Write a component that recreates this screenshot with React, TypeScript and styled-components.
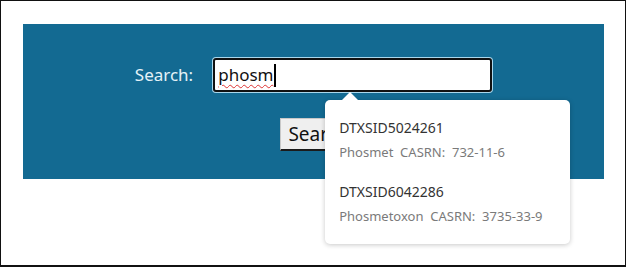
import React from "react";
import styled, { createGlobalStyle } from "styled-components";

const Global = createGlobalStyle`
  html, body { margin: 0; padding: 0; background: #fff; }
  body { font-family: "Noto Sans", "Open Sans", sans-serif; }
  * { box-sizing: border-box; }
`;

const Frame = styled.div`
  width: 626px;
  height: 267px;
  border: 1px solid #111;
  border-bottom-width: 2px;
  padding: 23px 21px 0 22px;
  background: #fff;
`;

const Panel = styled.div`
  height: 155px;
  background: #136a92;
  display: flex;
  flex-direction: column;
  align-items: center;
  padding-top: 34px;
`;

const Row = styled.div`
  display: flex;
  align-items: center;
  gap: 20px;
`;

const Label = styled.label`
  color: #e4f2f8;
  font-size: 17px;
  line-height: 24px;
`;

const FieldWrap = styled.div`
  position: relative;
`;

const Field = styled.div`
  width: 279px;
  height: 34px;
  background: #fff;
  border: 2px solid #111;
  border-radius: 3px;
  box-shadow: 0 0 0 1px #a9d7ec;
  display: flex;
  align-items: center;
  padding-left: 3px;
  font-size: 17px;
  color: #111;
`;

const Typed = styled.span`
  text-decoration: underline wavy #d33;
  text-decoration-thickness: 1px;
  text-underline-offset: 3px;
  line-height: 24px;
`;

const Caret = styled.span`
  display: inline-block;
  width: 2px;
  height: 23px;
  background: #000;
  margin-left: 1px;
`;

const Dropdown = styled.div`
  position: absolute;
  left: 112px;
  top: 42px;
  width: 245px;
  height: 144px;
  background: #fff;
  border-radius: 5px;
  box-shadow: 0 1px 5px rgba(0, 0, 0, 0.22);
  padding: 16px 0 0 14px;
  z-index: 2;

  &::before {
    content: "";
    position: absolute;
    left: 17px;
    top: -8px;
    border-left: 8px solid transparent;
    border-right: 8px solid transparent;
    border-bottom: 8px solid #fff;
  }
`;

const Item = styled.div`
  padding-bottom: 16px;
`;

const Title = styled.div`
  font-size: 14px;
  line-height: 24px;
  color: #333;
`;

const Sub = styled.div`
  font-size: 13px;
  line-height: 24px;
  color: #7a7a7a;
  white-space: pre;
`;

const Button = styled.button`
  margin-top: 26px;
  margin-left: 10px;
  height: 33px;
  padding: 0 7px;
  font-family: "Noto Sans", "Open Sans", sans-serif;
  font-size: 19px;
  color: #111;
  background: #efefef;
  border: 1px solid #c8c8c8;
  border-bottom: 2px solid #1b1b1b;
  border-radius: 0;
`;

const results = [
  { id: "DTXSID5024261", name: "Phosmet", casrn: "732-11-6" },
  { id: "DTXSID6042286", name: "Phosmetoxon", casrn: "3735-33-9" },
];

export default function App() {
  return (
    <>
      <Global />
      <Frame>
        <Panel>
          <Row>
            <Label>Search:</Label>
            <FieldWrap>
              <Field role="textbox">
                <Typed>phosm</Typed>
                <Caret />
              </Field>
              <Dropdown>
                {results.map((r) => (
                  <Item key={r.id}>
                    <Title>{r.id}</Title>
                    <Sub>{`${r.name}  CASRN:  ${r.casrn}`}</Sub>
                  </Item>
                ))}
              </Dropdown>
            </FieldWrap>
          </Row>
          <Button>Search</Button>
        </Panel>
      </Frame>
    </>
  );
}
